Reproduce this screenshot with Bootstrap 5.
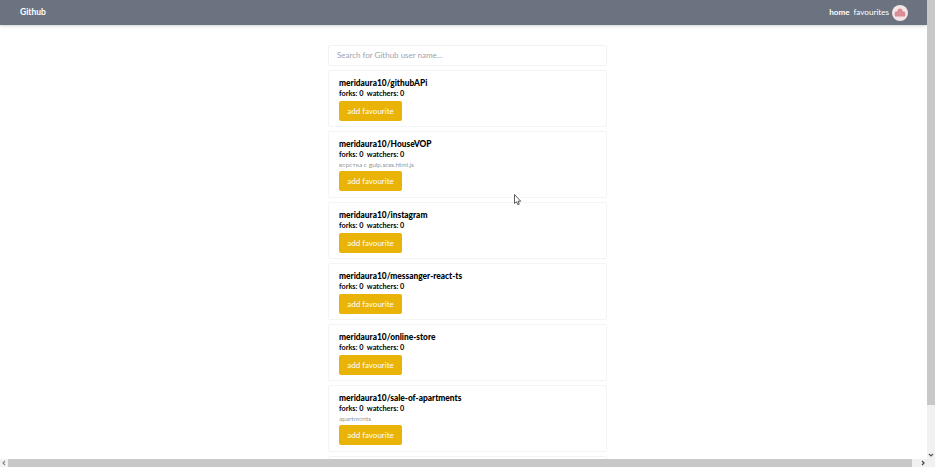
<!doctype html>
<html lang="en"><head><meta charset="utf-8"><title>Github</title>
<link href="https://cdn.jsdelivr.net/npm/bootstrap@5.3.0/dist/css/bootstrap.min.css" rel="stylesheet">
<style>
html,body{height:467px;overflow:hidden}
body{font-family:Lato,"Noto Sans",sans-serif;color:#000;background:#fff}
.frame-top{height:459px;min-height:0}
.page-pane{width:927px;min-width:0;overflow:hidden;position:relative}
.top-bar{height:25px;background:#6b7280;padding:0 19px 0 20px;box-shadow:0 1px 3px rgba(0,0,0,.18);color:#fff;position:relative}
.brand-name{font-size:8.500px;font-weight:700;color:#fff}
.top-links{font-size:8.100px;gap:4px}
.top-links a{color:#fff;text-decoration:none}
.avatar-dot{width:16px;height:16px;margin-left:-1px;display:block}
.list-wrap{padding-left:8px}
.list-col{width:279px;margin:19.500px auto 0}
.search-field{height:21.500px;font-size:8px;padding:0 8px;border:1px solid #f1f2f4;border-radius:2px;color:#333}
.search-field::placeholder{color:#9ca3af;opacity:1}
.repo-box{border:1px solid #f3f4f6;border-radius:2px;padding:6px 10px 5px;margin-top:4px;height:57px}
.repo-tall{height:67px}
.repo-end{height:20px}
.repo-title{font-size:8.350px;font-weight:900;line-height:12px;margin:0}
.repo-meta{font-size:7.300px;font-weight:700;line-height:10px;margin:0}
.repo-desc{font-size:6.600px;font-weight:300;line-height:9px;color:#333;margin:0 0 1px}
.fav-btn{display:block;width:63px;height:20px;margin-top:2px;padding:0;font-size:8px;line-height:20px;background:#eab308;border:0;border-radius:2px;color:#fff}
.fav-btn:hover{background:#eab308;color:#fff}
.v-track{width:8px;background:#f1f1f1;position:relative}
.v-thumb{width:8px;height:405px;background:#c8c8c8}
.h-track{height:8px;background:#f1f1f1;position:relative}
.h-thumb{width:904px;height:8px;background:#c8c8c8;margin-left:8px}
.arrow-mark{width:8px;height:8px;display:block}
.arrow-v{position:absolute;bottom:0;left:0}
.arrow-l{position:absolute;left:0;top:0}
.mouse-mark{position:absolute;left:514px;top:194px;width:8px;height:12px}
</style></head>
<body>
<div class="d-flex frame-top">
  <div class="page-pane">
    <nav class="top-bar d-flex align-items-center justify-content-between">
      <span class="brand-name">Github</span>
      <div class="d-flex align-items-center top-links">
        <a href="#" class="fw-bold">home</a>
        <a href="#">favourites</a>
        <svg class="avatar-dot" viewBox="0 0 16 16"><circle cx="8" cy="8" r="8" fill="#f3e4e5"/><g fill="#d98c95"><circle cx="8" cy="6" r="2.500"/><circle cx="5" cy="8.500" r="2.300"/><circle cx="11" cy="8.500" r="2.300"/><rect x="2.800" y="8.500" width="10.400" height="3" rx=".8"/></g></svg>
      </div>
    </nav>
    <div class="list-wrap"><div class="list-col">
      <input class="form-control search-field" placeholder="Search for Github user name...">
      <div class="repo-box"><p class="repo-title">meridaura10/githubAPi</p><p class="repo-meta">forks: 0&nbsp; watchers: 0</p><button class="btn fav-btn">add favourite</button></div>
      <div class="repo-box repo-tall"><p class="repo-title">meridaura10/HouseVOP</p><p class="repo-meta">forks: 0&nbsp; watchers: 0</p><p class="repo-desc">верстка с gulp.scss.html.js</p><button class="btn fav-btn">add favourite</button></div>
      <div class="repo-box"><p class="repo-title">meridaura10/instagram</p><p class="repo-meta">forks: 0&nbsp; watchers: 0</p><button class="btn fav-btn">add favourite</button></div>
      <div class="repo-box"><p class="repo-title">meridaura10/messanger-react-ts</p><p class="repo-meta">forks: 0&nbsp; watchers: 0</p><button class="btn fav-btn">add favourite</button></div>
      <div class="repo-box"><p class="repo-title">meridaura10/online-store</p><p class="repo-meta">forks: 0&nbsp; watchers: 0</p><button class="btn fav-btn">add favourite</button></div>
      <div class="repo-box repo-tall"><p class="repo-title">meridaura10/sale-of-apartments</p><p class="repo-meta">forks: 0&nbsp; watchers: 0</p><p class="repo-desc">apartments</p><button class="btn fav-btn">add favourite</button></div>
      <div class="repo-box repo-end"></div>
    </div></div>
    <svg class="mouse-mark" viewBox="0 0 8 12"><path d="M.5.500v9l2-1.800 1.300 3 1.500-.6-1.300-2.900h2.700z" fill="#fff" stroke="#333" stroke-width=".8"/></svg>
  </div>
  <div class="v-track">
    <div class="v-thumb"></div>
    <svg class="arrow-mark arrow-v" viewBox="0 0 8 8"><path d="M2 3l2 2 2-2" fill="none" stroke="#555" stroke-width="1.200"/></svg>
  </div>
</div>
<div class="h-track d-flex">
  <svg class="arrow-mark arrow-l" viewBox="0 0 8 8"><path d="M5 2L3 4l2 2" fill="none" stroke="#888" stroke-width="1.200"/></svg>
  <div class="h-thumb"></div>
  <svg class="arrow-mark ms-auto me-2" viewBox="0 0 8 8"><path d="M3 2l2 2-2 2" fill="none" stroke="#444" stroke-width="1.200"/></svg>
</div>
</body></html>
